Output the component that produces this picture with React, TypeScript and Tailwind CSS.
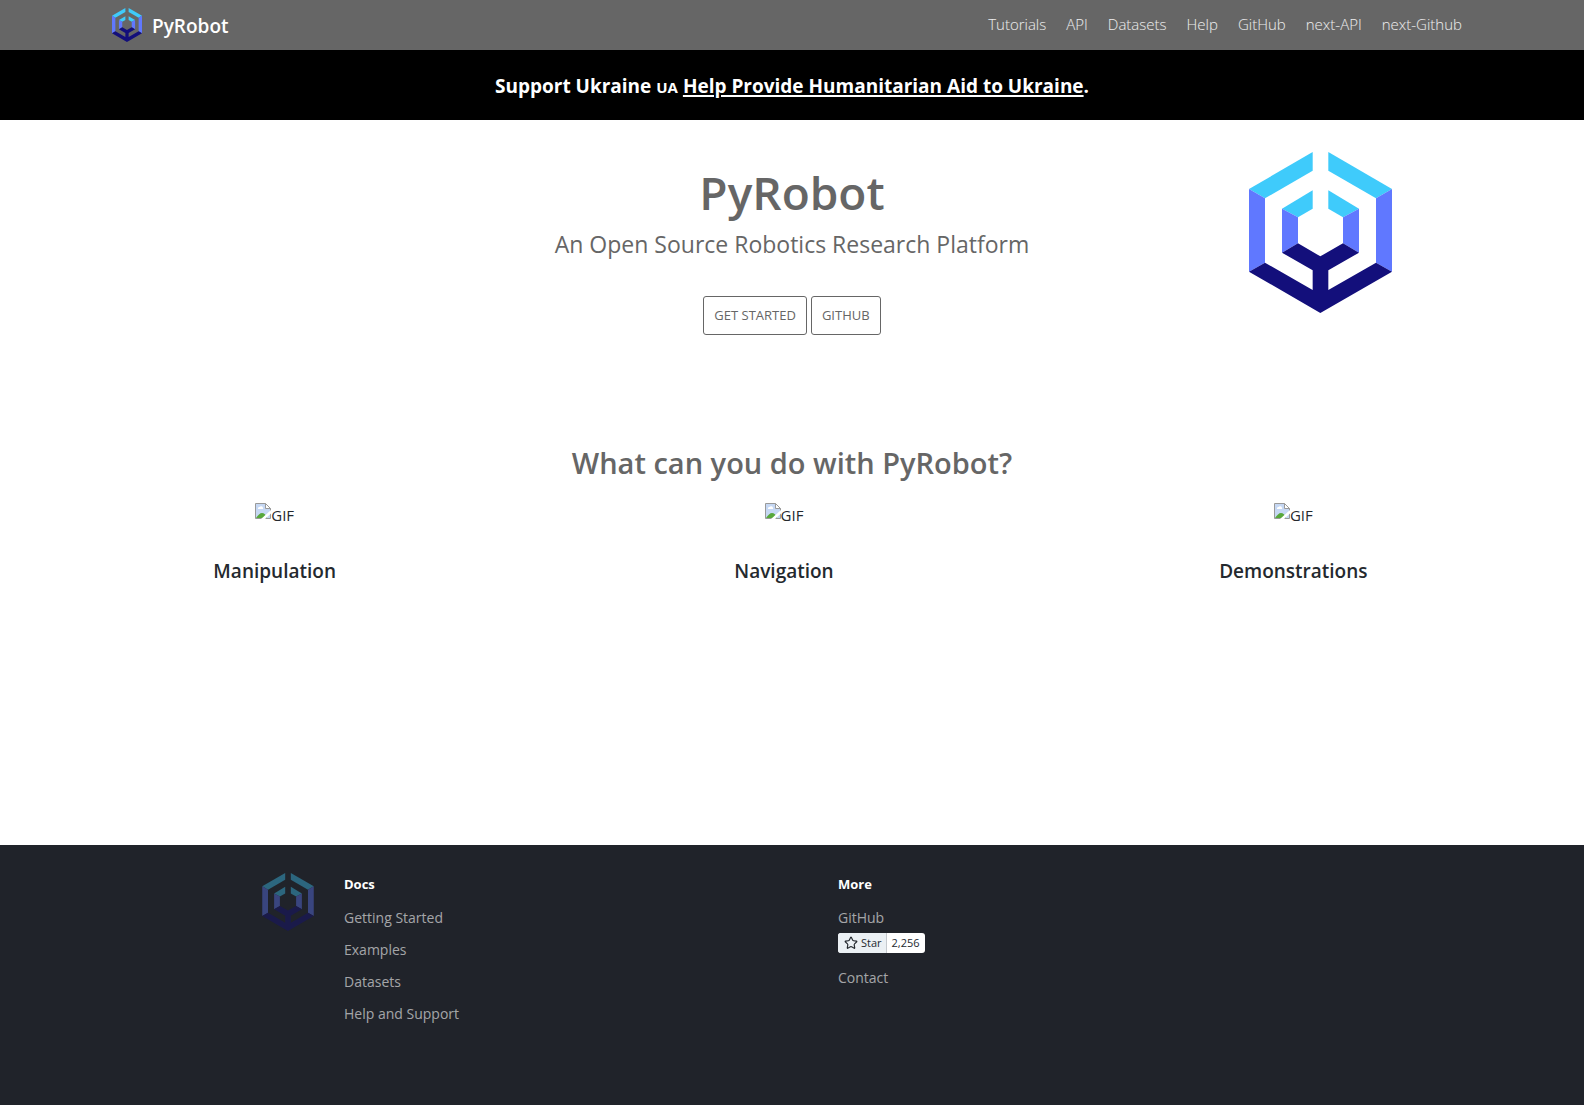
import { Star } from 'lucide-react';

const navLinks = ['Tutorials', 'API', 'Datasets', 'Help', 'GitHub', 'next-API', 'next-Github'];

const features = ['Manipulation', 'Navigation', 'Demonstrations'];

const docLinks = ['Getting Started', 'Examples', 'Datasets', 'Help and Support'];

function Logo({ className }: { className?: string }) {
  return (
    <svg viewBox="57 36 429 483" className={className} aria-hidden="true">
      <g fill="#3fcbfb">
        <path d="M57 147 248 36V92L105 175Z" />
        <path d="M486 147 295 36V92L438 175Z" />
        <path d="M156 206 248 151V206L204 232Z" />
        <path d="M387 206 295 151V206L339 232Z" />
      </g>
      <g fill="#6078ff">
        <path d="M57 147 105 175V368L57 395Z" />
        <path d="M486 147 438 175V368L486 395Z" />
        <path d="M156 206 204 232V310L156 338Z" />
        <path d="M387 206 339 232V310L387 338Z" />
      </g>
      <path
        fill="#130f7b"
        d="M204 310 271 349 339 310 387 338 295 391V450L438 368 486 395 271 519 57 395 105 368 248 450V391L156 338Z"
      />
    </svg>
  );
}

function BrokenImage() {
  return (
    <svg viewBox="0 0 16 16" className="size-4" aria-hidden="true">
      <path d="M.5.5h10l5 5v10H.5Z" fill="#c6d8f4" />
      <path d="M3 6a1.5 1.5 0 0 1 1.5-2 2 2 0 0 1 3.5 1 1 1 0 0 1 0 1H3Z" fill="#fff" />
      <path d="M1 15c2-3 4-5 6-5s4 1.5 5 5Z" fill="#58a83c" />
      <path d="M.5 15.5V.5h10l5 5v10Z" fill="none" stroke="#9a9a9a" />
      <path d="M10.5.5v5h5Z" fill="#fff" stroke="#9a9a9a" />
      <path d="M6 16 16 7v3.5L10 16Z" fill="#fff" />
    </svg>
  );
}

function Header() {
  return (
    <header className="bg-[#666666]">
      <div className="mx-auto flex h-[50px] max-w-[1360px] items-center justify-between">
        <a href="#" className="flex items-center gap-2.5 text-white">
          <Logo className="h-[34px] w-[30px]" />
          <span className="pt-0.5 text-[19px] font-semibold">PyRobot</span>
        </a>
        <nav className="flex pb-0.5">
          {navLinks.map((label) => (
            <a key={label} href="#" className="px-2.5 text-[15px] font-light text-white/90">
              {label}
            </a>
          ))}
        </nav>
      </div>
    </header>
  );
}

function Banner() {
  return (
    <div className="flex h-[70px] items-center justify-center bg-black pt-0.5 text-[19px] font-bold text-white">
      <p>
        Support Ukraine <span className="text-[15px]">UA</span>{' '}
        <a href="#" className="underline decoration-2 underline-offset-2">
          Help Provide Humanitarian Aid to Ukraine
        </a>
        .
      </p>
    </div>
  );
}

function Hero() {
  return (
    <section className="grid grid-cols-[1fr_auto_1fr] pt-8 text-[#666666]">
      <div className="col-start-2 pt-2 text-center">
        <h1 className="text-[46px] leading-[64px] font-semibold">PyRobot</h1>
        <p className="text-[23px] leading-10">An Open Source Robotics Research Platform</p>
        <div className="mt-8 flex justify-center gap-1">
          {['Get Started', 'GitHub'].map((label) => (
            <a
              key={label}
              href="#"
              className="rounded-[3px] border border-[#666666] px-2.5 py-2 text-[13px] leading-[21px] uppercase"
            >
              {label}
            </a>
          ))}
        </div>
      </div>
      <Logo className="mr-48 h-[161px] w-[143px] justify-self-end" />
    </section>
  );
}

function Features() {
  return (
    <section className="pt-[104px]">
      <h2 className="text-center text-[29px] leading-[48px] font-semibold text-[#666666]">
        What can you do with PyRobot?
      </h2>
      <div className="mt-4 grid grid-cols-3 pr-9 pl-5 text-center">
        {features.map((title) => (
          <div key={title}>
            <div className="flex justify-center text-[15px] leading-6">
              <BrokenImage />
              <span>GIF</span>
            </div>
            <h3 className="mt-8 text-[19px] leading-6 font-semibold">{title}</h3>
          </div>
        ))}
      </div>
    </section>
  );
}

function Footer() {
  return (
    <footer className="bg-[#20232a] pt-7 pb-20 text-sm text-white/60">
      <div className="mx-auto flex max-w-[1100px] pr-2.5 pl-5">
        <a href="#" aria-label="PyRobot" className="w-[82px]">
          <Logo className="h-[58px] w-[52px] opacity-40" />
        </a>
        <div className="flex-1">
          <h5 className="pb-0.5 text-[13px] leading-[22px] font-bold text-white">Docs</h5>
          {docLinks.map((label) => (
            <a key={label} href="#" className="mt-2 block pt-0.5 leading-[22px]">
              {label}
            </a>
          ))}
        </div>
        <div className="flex-1">
          <h5 className="pb-0.5 text-[13px] leading-[22px] font-bold text-white">More</h5>
          <a href="#" className="mt-2 block pt-0.5 leading-[22px]">
            GitHub
          </a>
          <div className="mt-1 flex h-5 w-fit overflow-hidden rounded-[3px] bg-white text-[11px] leading-5 text-[#24292f]">
            <a
              href="#"
              className="flex items-center gap-[3px] border-r border-[#c5c9ce] bg-[#ebf0f4] pr-1 pl-1.5"
            >
              <Star className="size-3.5" />
              Star
            </a>
            <a href="#" className="px-[5px]">
              2,256
            </a>
          </div>
          <a href="#" className="mt-3 block pt-0.5 leading-[22px]">
            Contact
          </a>
        </div>
      </div>
    </footer>
  );
}

export default function App() {
  return (
    <div className="flex min-h-screen flex-col bg-white font-['Open_Sans','Noto_Sans',sans-serif] text-[#24292e]">
      <Header />
      <Banner />
      <main className="flex-1 pb-[260px]">
        <Hero />
        <Features />
      </main>
      <Footer />
    </div>
  );
}
